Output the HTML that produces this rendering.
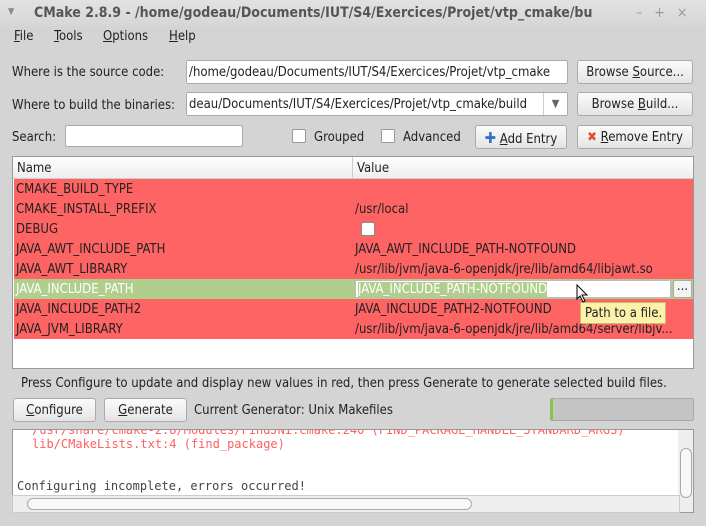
<!DOCTYPE html><html><head><style>
*{box-sizing:border-box}
body{margin:0;width:706px;height:526px;background:#d4d4d4;font-family:"DejaVu Sans Condensed","Liberation Sans",sans-serif;font-size:13px;color:#222;position:relative;overflow:hidden}
.a{position:absolute;white-space:nowrap}
.btn{position:absolute;border:1px solid #aaa;border-radius:3px;background:linear-gradient(#fbfbfb,#e4e4e4);text-align:center;line-height:24px;height:24px}
.inp{position:absolute;background:#fff;border:1px solid #aaa;border-radius:2px;height:24px;line-height:24px;padding-left:2px;overflow:hidden}
.row{position:absolute;left:14px;width:679px;height:20px;line-height:22px;background:#ff6464}
.row span{position:absolute;left:2px}
.row b{font-weight:normal;position:absolute;left:341px}
.cb{position:absolute;width:14px;height:14px;border:1px solid #999;border-radius:2px;background:#fff}
</style></head><body>
<div class="a" style="left:0;top:0;width:706px;height:26px;background:linear-gradient(#e2e2e2,#d6d6d6)"></div>
<div class="a" style="left:8px;top:7px;color:#888;font-size:9px">▼</div>
<div class="a" style="left:34px;top:5px;font-size:14px;font-weight:bold;color:#555">CMake 2.8.9 - /home/godeau/Documents/IUT/S4/Exercices/Projet/vtp_cmake/bu</div>
<div class="a" style="left:636px;top:5px;color:#999;font-size:14px">–&nbsp;&nbsp;&nbsp;+&nbsp;&nbsp;&nbsp;×</div>
<div class="a" style="left:14px;top:29px"><u>F</u>ile</div>
<div class="a" style="left:54px;top:29px"><u>T</u>ools</div>
<div class="a" style="left:103px;top:29px"><u>O</u>ptions</div>
<div class="a" style="left:169px;top:29px"><u>H</u>elp</div>
<div class="a" style="left:12px;top:65px">Where is the source code:</div>
<div class="inp" style="left:186px;top:60px;width:382px">/home/godeau/Documents/IUT/S4/Exercices/Projet/vtp_cmake</div>
<div class="btn" style="left:577px;top:60px;width:116px">Browse <u>S</u>ource...</div>
<div class="a" style="left:12px;top:98px">Where to build the binaries:</div>
<div class="inp" style="left:186px;top:92px;width:382px">deau/Documents/IUT/S4/Exercices/Projet/vtp_cmake/build</div>
<div class="a" style="left:543px;top:93px;width:24px;height:22px;border-left:1px solid #ccc;background:#fff;text-align:center;line-height:22px;color:#666;font-size:11px">▼</div>
<div class="btn" style="left:577px;top:92px;width:116px">Browse <u>B</u>uild...</div>
<div class="a" style="left:12px;top:130px">Search:</div>
<div class="inp" style="left:65px;top:125px;width:178px;height:22px"></div>
<div class="cb" style="left:292px;top:129px"></div><div class="a" style="left:314px;top:130px">Grouped</div>
<div class="cb" style="left:381px;top:129px"></div><div class="a" style="left:403px;top:130px">Advanced</div>
<div class="btn" style="left:475px;top:125px;width:92px"><span style="color:#3a6fc8;font-weight:bold;font-size:15px">✚</span> <u>A</u>dd Entry</div>
<div class="btn" style="left:577px;top:125px;width:116px"><span style="color:#e0502d;font-weight:bold">✖</span> <u>R</u>emove Entry</div>
<div class="a" style="left:12px;top:156px;width:682px;height:213px;background:#fff;border:1px solid #999"></div>
<div class="a" style="left:13px;top:157px;width:680px;height:22px;background:linear-gradient(#fdfdfd,#eee);border-bottom:1px solid #ccc"></div>
<div class="a" style="left:352px;top:157px;width:1px;height:22px;background:#ccc"></div>
<div class="a" style="left:17px;top:161px">Name</div><div class="a" style="left:357px;top:161px">Value</div>
<div class="row" style="top:179px"><span>CMAKE_BUILD_TYPE</span></div>
<div class="row" style="top:199px"><span>CMAKE_INSTALL_PREFIX</span><b>/usr/local</b></div>
<div class="row" style="top:219px"><span>DEBUG</span><b><i style="display:inline-block;width:14px;height:14px;background:#fff;border:1px solid #888;border-radius:2px;margin-top:3px;margin-left:6px"></i></b></div>
<div class="row" style="top:239px"><span>JAVA_AWT_INCLUDE_PATH</span><b>JAVA_AWT_INCLUDE_PATH-NOTFOUND</b></div>
<div class="row" style="top:259px"><span>JAVA_AWT_LIBRARY</span><b>/usr/lib/jvm/java-6-openjdk/jre/lib/amd64/libjawt.so</b></div>
<div class="row" style="top:279px;background:#b0cf8c;color:#fff"><span>JAVA_INCLUDE_PATH</span></div>
<div class="a" style="left:355px;top:280px;width:316px;height:18px;background:#fff;border:1px solid #bbb;line-height:18px;padding-left:2px"><span style="background:#b0cf8c;color:#fff">JAVA_INCLUDE_PATH-NOTFOUND</span></div>
<div class="a" style="left:673px;top:280px;width:19px;height:18px;background:#f4f4f4;border:1px solid #aaa;border-radius:2px;line-height:12px;text-align:center">...</div>
<div class="row" style="top:299px"><span>JAVA_INCLUDE_PATH2</span><b>JAVA_INCLUDE_PATH2-NOTFOUND</b></div>
<div class="row" style="top:319px"><span>JAVA_JVM_LIBRARY</span><b>/usr/lib/jvm/java-6-openjdk/jre/lib/amd64/server/libjv...</b></div>
<div class="a" style="left:580px;top:302px;width:86px;height:22px;background:#fbf1a9;border:1px solid #c9bd74;line-height:22px;padding-left:4px">Path to a file.</div>
<svg class="a" style="left:576px;top:284px" width="14" height="20"><path d="M1 1 L1 15 L4 12 L7 18 L9 17 L6 11 L11 11 Z" fill="#fff" stroke="#000"/></svg>
<div class="a" style="left:21px;top:376px">Press Configure to update and display new values in red, then press Generate to generate selected build files.</div>
<div class="btn" style="left:13px;top:398px;width:83px"><u>C</u>onfigure</div>
<div class="btn" style="left:104px;top:398px;width:83px"><u>G</u>enerate</div>
<div class="a" style="left:194px;top:403px">Current Generator: Unix Makefiles</div>
<div class="a" style="left:550px;top:398px;width:144px;height:23px;background:#c4c4c4;border:1px solid #aaa;border-left:3px solid #8bc34a;border-radius:2px"></div>
<div class="a" style="left:12px;top:429px;width:682px;height:84px;background:#fff;border:1px solid #999;overflow:hidden;font-family:'DejaVu Sans Mono','Liberation Mono',monospace;font-size:12px">
<div class="a" style="left:19px;top:-7px;color:#ff6060">/usr/share/cmake-2.8/Modules/FindJNI.cmake:240 (FIND_PACKAGE_HANDLE_STANDARD_ARGS)</div>
<div class="a" style="left:19px;top:7px;color:#ff6060">lib/CMakeLists.txt:4 (find_package)</div>
<div class="a" style="left:4px;top:49px;color:#444">Configuring incomplete, errors occurred!</div>
<div class="a" style="left:665px;top:0;width:16px;height:82px;background:#eee"></div>
<div class="a" style="left:667px;top:18px;width:12px;height:50px;background:#f8f8f8;border:1px solid #aaa;border-radius:6px"></div>
</div>
<div class="a" style="left:12px;top:495px;width:668px;height:18px;background:#eee;border:1px solid #ccc"></div>
<div class="a" style="left:27px;top:498px;width:445px;height:12px;background:#f8f8f8;border:1px solid #aaa;border-radius:6px"></div>
</body></html>
